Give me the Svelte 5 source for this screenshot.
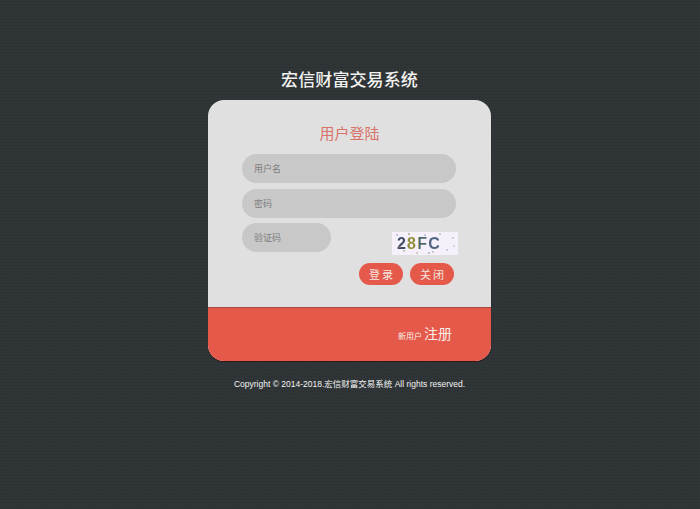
<script lang="ts">
    // noise specks on the captcha image
    const specks = [
        [5, 3, '#8a6fb0'], [12, 19, '#6c8f5a'], [17, 2, '#555'], [25, 21, '#b0894f'],
        [33, 3, '#7a7ab8'], [41, 20, '#888'], [48, 2, '#7ea06a'], [55, 18, '#a67fb8'],
        [61, 6, '#999'], [62, 14, '#8aa0c0'], [8, 15, '#c09a70'], [37, 21, '#666']
    ] as const
</script>

<div class="page">
    <h1 class="title">宏信财富交易系统</h1>

    <div class="card">
        <form class="login">
            <h2 class="heading">用户登陆</h2>
            <input class="field" type="text" placeholder="用户名" />
            <input class="field" type="password" placeholder="密码" />
            <div class="code-row">
                <input class="field code" type="text" placeholder="验证码" />
                <div class="captcha">
                    <span class="captcha-text">28FC</span>
                    <svg class="captcha-noise" viewBox="0 0 66 23" aria-hidden="true">
                        {#each specks as [x, y, fill]}
                            <circle cx={x} cy={y} r="0.7" {fill} />
                        {/each}
                    </svg>
                </div>
            </div>
            <div class="actions">
                <button class="btn" type="button">登录</button>
                <button class="btn" type="button">关闭</button>
            </div>
        </form>
        <div class="signup">
            <span class="signup-hint">新用户</span>
            <a class="signup-link" href="#signup">注册</a>
        </div>
    </div>

    <p class="copyright">Copyright © 2014-2018.宏信财富交易系统 All rights reserved.</p>
</div>

<style>
    :global(body) {
        margin: 0;
        background-color: #2f3436;
    }

    .page {
        box-sizing: border-box;
        height: 509px;
        padding: 67px 1px 0 0;
        display: flex;
        flex-direction: column;
        align-items: center;
        font-family: "Liberation Sans", "Noto Sans CJK SC", sans-serif;
        background-color: #2f3436;
        background-image:
            repeating-linear-gradient(0deg, rgba(0, 0, 0, 0.05) 0 1px, transparent 1px 3px),
            repeating-linear-gradient(90deg, rgba(255, 255, 255, 0.012) 0 1px, transparent 1px 3px);
    }

    .title {
        margin: 0 0 9px;
        height: 24px;
        line-height: 24px;
        font-family: "Noto Sans CJK SC", sans-serif;
        font-size: 17px;
        font-weight: 500;
        letter-spacing: 0.1px;
        color: #f2f2f0;
    }

    .card {
        width: 283px;
        height: 261px;
        border-radius: 16px;
        overflow: hidden;
        display: flex;
        flex-direction: column;
        background: #e0e0e0;
        box-shadow: 0 1px 1px rgba(60, 10, 10, 0.7);
    }

    .login {
        box-sizing: border-box;
        height: 208px;
        padding: 0 34px;
        display: flex;
        flex-direction: column;
        border-bottom: 1px solid #a9473c;
    }

    .heading {
        margin: 22px 0 10px;
        height: 22px;
        line-height: 22px;
        text-align: center;
        font-family: "Noto Sans CJK SC", sans-serif;
        font-size: 15px;
        font-weight: 400;
        color: #d8736a;
    }

    .field {
        box-sizing: border-box;
        width: 214px;
        height: 29px;
        margin: 0 0 6px;
        padding: 0 12px;
        border: 0;
        border-radius: 15px;
        background: #c8c8c8;
        outline: none;
        font-family: "Noto Sans CJK SC", sans-serif;
        font-size: 9px;
        color: #555;
    }

    .field::placeholder {
        color: #7d7d7d;
        opacity: 1;
    }

    .code-row {
        display: flex;
        align-items: flex-start;
        justify-content: space-between;
        width: 216px;
        margin-top: -1px;
    }

    .field.code {
        width: 89px;
        margin: 0;
    }

    .captcha {
        position: relative;
        width: 66px;
        height: 23px;
        margin-top: 9px;
        display: flex;
        align-items: center;
        background: #f5f0f9;
    }

    .captcha-text {
        margin-left: 5px;
        font-family: "Liberation Sans", sans-serif;
        font-size: 16px;
        font-weight: 700;
        letter-spacing: 1.2px;
        background: linear-gradient(90deg, #3f4a66 0 25%, #8f8f3c 25% 50%, #44666c 50% 70%, #4f6480 70%);
        -webkit-background-clip: text;
        background-clip: text;
        color: transparent;
    }

    .captcha-noise {
        position: absolute;
        inset: 0;
        width: 100%;
        height: 100%;
    }

    .actions {
        display: flex;
        justify-content: flex-end;
        gap: 7px;
        width: 212px;
        margin-top: 8px;
    }

    .btn {
        width: 44px;
        height: 22px;
        padding: 0 0 0 2px;
        border: 0;
        border-radius: 11px;
        background: #e4594a;
        font-family: "Noto Sans CJK SC", sans-serif;
        font-size: 11px;
        letter-spacing: 2px;
        color: #f6e6e0;
    }

    .signup {
        flex: 1;
        display: flex;
        align-items: center;
        justify-content: flex-end;
        gap: 2px;
        padding: 0 39px 3px 0;
        background: #e4594a;
        color: #fbeee8;
        font-family: "Noto Sans CJK SC", sans-serif;
    }

    .signup-hint {
        font-size: 8px;
        padding-top: 4px;
    }

    .signup-link {
        font-size: 14px;
        color: inherit;
        text-decoration: none;
    }

    .copyright {
        margin: 17px 0 0;
        font-size: 8.5px;
        line-height: 12px;
        color: #f4f4f4;
    }
</style>
